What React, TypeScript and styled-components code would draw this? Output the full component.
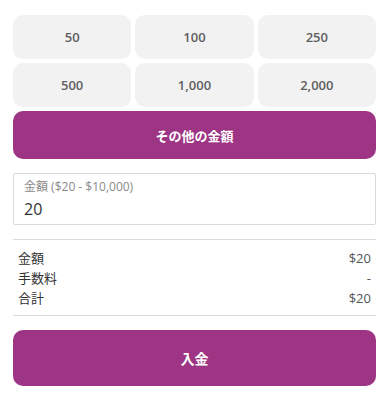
import React, { useState } from 'react';
import styled, { createGlobalStyle } from 'styled-components';

const GlobalStyle = createGlobalStyle`
  body {
    margin: 0;
    background: #fff;
    font-family: "Open Sans", "Noto Sans CJK JP", sans-serif;
  }
`;

const Page = styled.div`
  padding: 15px 12px 0 13px;
  display: flex;
  flex-direction: column;
`;

const PresetGrid = styled.div`
  display: grid;
  grid-template-columns: repeat(3, 1fr);
  gap: 4px;
`;

const Preset = styled.button`
  height: 44px;
  border: none;
  border-radius: 10px;
  background: #f2f2f2;
  color: #5e5e5e;
  font-family: inherit;
  font-size: 13px;
  font-weight: 600;
  cursor: pointer;
`;

const PrimaryButton = styled.button<{ $height: number }>`
  height: ${(p) => p.$height}px;
  border: none;
  border-radius: 10px;
  background: #9d3584;
  color: #fff;
  font-family: "Noto Sans CJK JP", sans-serif;
  font-size: 13px;
  font-weight: 700;
  cursor: pointer;
`;

const OtherButton = styled(PrimaryButton)`
  margin-top: 4px;
`;

const Field = styled.label`
  margin-top: 14px;
  height: 52px;
  box-sizing: border-box;
  border: 1px solid #d9d9d9;
  border-radius: 2px;
  padding: 5px 10px 0;
  display: flex;
  flex-direction: column;
`;

const FieldLabel = styled.span`
  font-size: 12px;
  color: #8a8a8a;
  line-height: 16px;
`;

const FieldInput = styled.input`
  border: none;
  outline: none;
  padding: 0;
  margin-top: 3px;
  font-family: inherit;
  font-size: 16px;
  color: #333;
  background: transparent;
`;

const Summary = styled.div`
  margin-top: 14px;
  border-top: 1px solid #dcdcdc;
  border-bottom: 1px solid #dcdcdc;
  padding: 8px 5px 7px;
  display: flex;
  flex-direction: column;
`;

const Row = styled.div`
  display: flex;
  justify-content: space-between;
  font-size: 13px;
  line-height: 20px;
  color: #333;
`;

const Value = styled.span`
  color: #555;
`;

const DepositButton = styled(PrimaryButton)`
  margin-top: 14px;
  font-size: 14px;
`;

const presets = ['50', '100', '250', '500', '1,000', '2,000'];

export default function App() {
  const [amount, setAmount] = useState('20');
  const shown = amount ? `$${amount}` : '-';

  return (
    <>
      <GlobalStyle />
      <Page>
        <PresetGrid>
          {presets.map((p) => (
            <Preset key={p} onClick={() => setAmount(p.replace(',', ''))}>
              {p}
            </Preset>
          ))}
        </PresetGrid>
        <OtherButton $height={48}>その他の金額</OtherButton>
        <Field>
          <FieldLabel>金額 ($20 - $10,000)</FieldLabel>
          <FieldInput value={amount} onChange={(e) => setAmount(e.target.value)} />
        </Field>
        <Summary>
          <Row>
            <span>金額</span>
            <Value>{shown}</Value>
          </Row>
          <Row>
            <span>手数料</span>
            <Value>-</Value>
          </Row>
          <Row>
            <span>合計</span>
            <Value>{shown}</Value>
          </Row>
        </Summary>
        <DepositButton $height={56}>入金</DepositButton>
      </Page>
    </>
  );
}
